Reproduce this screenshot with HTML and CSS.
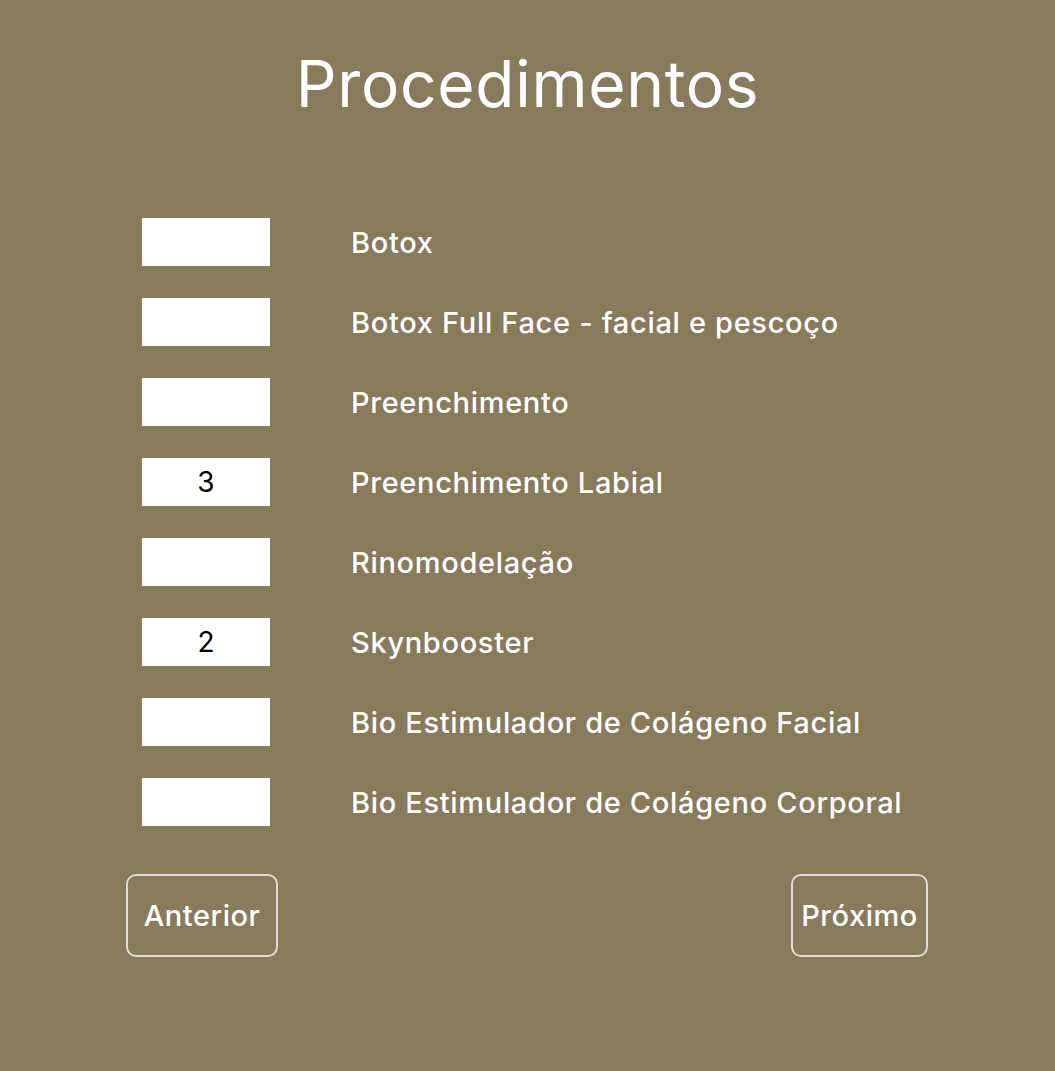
FILE: index.html
```html
<!DOCTYPE html>
<html lang="pt">
<head>
<meta charset="utf-8">
<title>Procedimentos</title>
<link rel="stylesheet" href="styles.css">
</head>
<body>
<main class="page">
  <h1 class="title">Procedimentos</h1>
  <form class="form">
    <div class="list">
      <label class="row"><input class="qty" type="text" value=""><span class="name">Botox</span></label>
      <label class="row"><input class="qty" type="text" value=""><span class="name">Botox Full Face - facial e pescoço</span></label>
      <label class="row"><input class="qty" type="text" value=""><span class="name">Preenchimento</span></label>
      <label class="row"><input class="qty" type="text" value="3"><span class="name">Preenchimento Labial</span></label>
      <label class="row"><input class="qty" type="text" value=""><span class="name">Rinomodelação</span></label>
      <label class="row"><input class="qty" type="text" value="2"><span class="name">Skynbooster</span></label>
      <label class="row"><input class="qty" type="text" value=""><span class="name">Bio Estimulador de Colágeno Facial</span></label>
      <label class="row"><input class="qty" type="text" value=""><span class="name">Bio Estimulador de Colágeno Corporal</span></label>
    </div>
    <div class="actions">
      <button type="button" class="btn btn-prev">Anterior</button>
      <button type="button" class="btn btn-next">Próximo</button>
    </div>
  </form>
</main>
</body>
</html>
```

FILE: styles.css
```css
* { box-sizing: border-box; }
html, body {
  margin: 0;
  padding: 0;
  background: #877b5c;
}
body {
  font-family: Inter, "Noto Sans", sans-serif;
  color: #fff;
  min-height: 1071px;
}
.page {
  display: flex;
  flex-direction: column;
  align-items: center;
  padding-top: 44px;
}
.title {
  margin: 0;
  font-size: 64px;
  font-weight: 400;
  line-height: 80px;
  letter-spacing: 0.7px;
}
.form {
  width: 802px;
  margin: 94px 1px 0 0;
}
.list {
  display: flex;
  flex-direction: column;
  gap: 32px;
  padding-left: 16px;
}
.row {
  display: flex;
  align-items: center;
  gap: 81px;
  height: 48px;
}
.qty {
  width: 128px;
  height: 48px;
  border: none;
  background: #fff;
  text-align: center;
  font-family: Inter, "Noto Sans", sans-serif;
  font-size: 28px;
  color: #000;
  padding: 0;
  outline: none;
}
.name {
  font-size: 29px;
  font-weight: 500;
  letter-spacing: 0.68px;
}
.actions {
  display: flex;
  justify-content: space-between;
  margin-top: 48px;
}
.btn {
  height: 83px;
  border: 2px solid #dcdcdc;
  border-radius: 10px;
  background: transparent;
  color: #fff;
  font-family: Inter, "Noto Sans", sans-serif;
  font-size: 29px;
  font-weight: 500;
  letter-spacing: 0.55px;
  padding: 0;
  text-align: center;
}
.btn-prev { width: 152px; }
.btn-next { width: 137px; }
```
